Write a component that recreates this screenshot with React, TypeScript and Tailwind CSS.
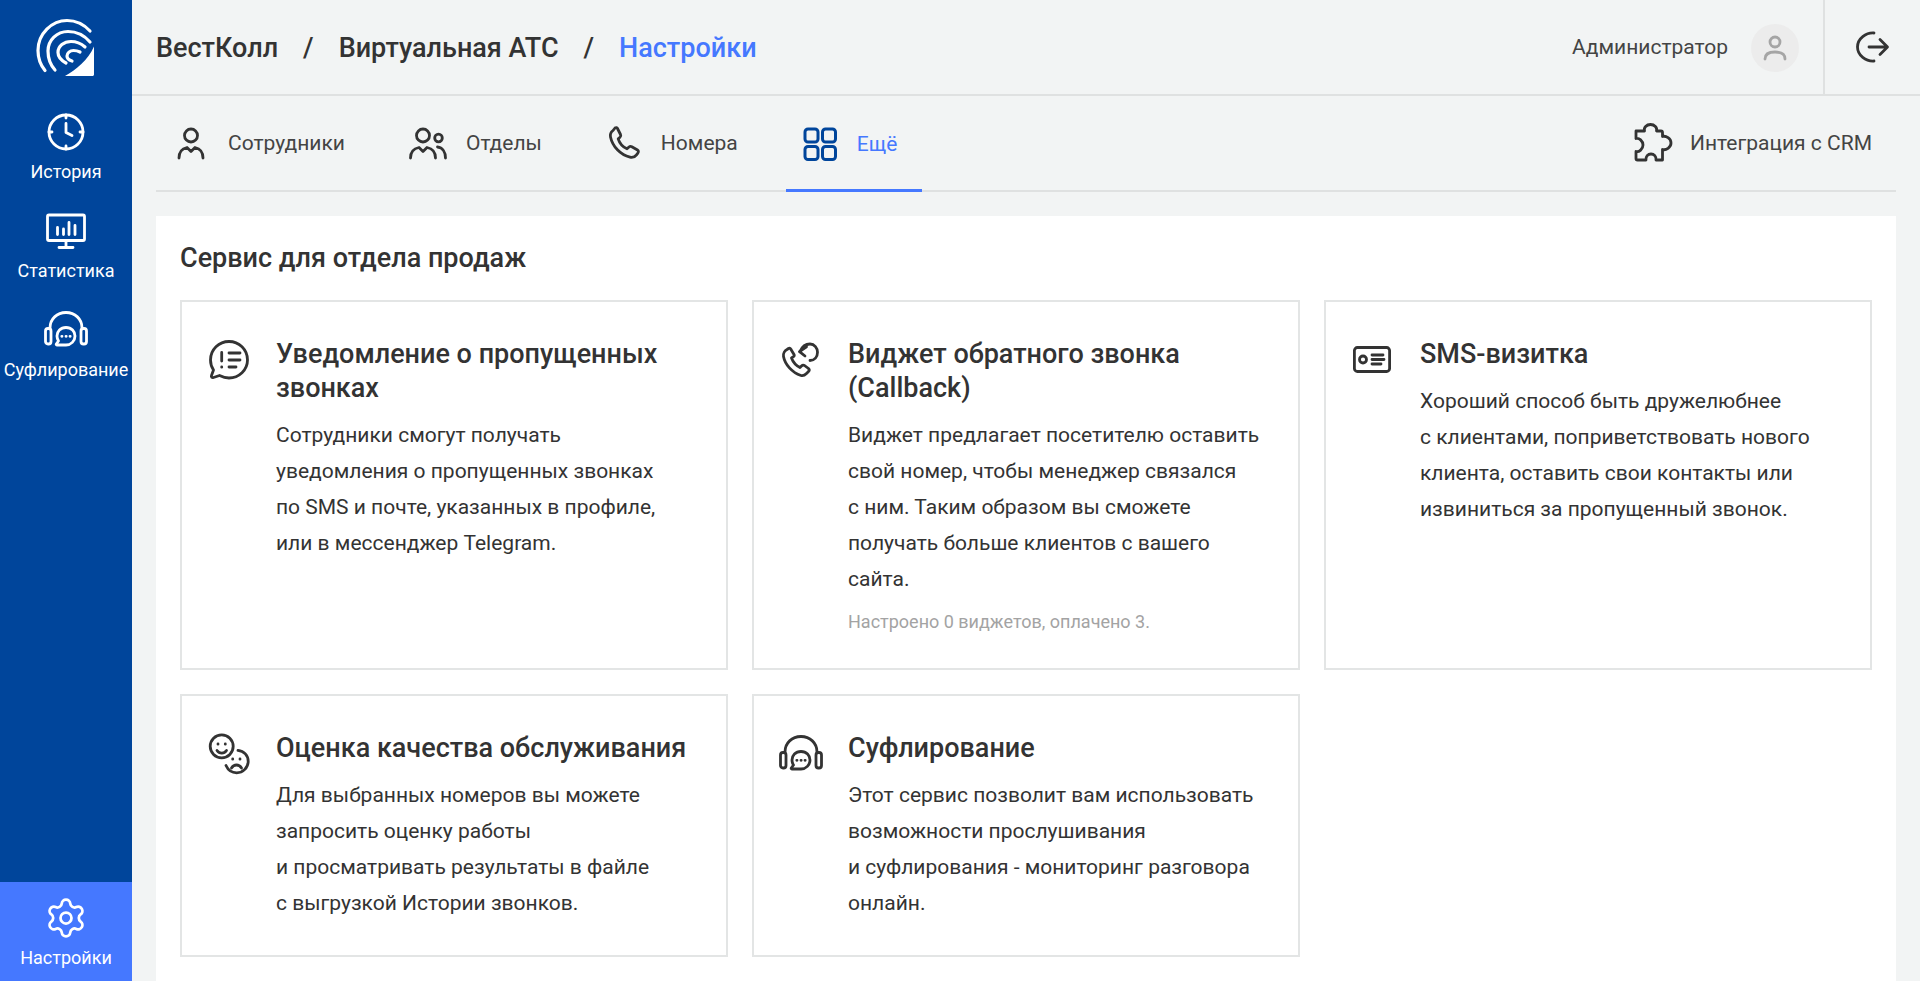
import React from "react";
import { Settings } from "lucide-react";

const S = ({ size = 44, w = 2.8, className, children }: { size?: number; w?: number; className?: string; children: React.ReactNode }) => (
  <svg width={size} height={size} viewBox={`0 0 ${size} ${size}`} fill="none" stroke="currentColor" strokeWidth={w} strokeLinecap="round" strokeLinejoin="round" className={className}>
    {children}
  </svg>
);

const Logo = () => (
  <svg width="132" height="96" viewBox="0 0 132 96" fill="none" stroke="#fff" strokeWidth="3.200" strokeLinecap="round">
    <path d="M45 70.500C40.500 65 38 58 38 50.500C38 33.500 52 20.500 67 20.500C75 20.500 84 24.500 90 31" />
    <path d="M55 70C50.500 65 48 58 48 51C48 40 57 31.500 68 31.500C76 31.500 84 35 90 42" />
    <path d="M66 63C60.500 60 58 56.500 58 52.500C58 46 64 41.500 71 41.500C76 41.500 81 43.500 85 47" />
    <path d="M72 61C68.500 60 67 58 67 56C67 53 70 50.500 73.500 50.500C76 50.500 78 51 80 52" />
    <path d="M94 46.500V74.500C94 75.300 93.300 76 92.500 76H65C76 70 88 60 94 46.500Z" fill="#fff" stroke="none" />
  </svg>
);

const History = () => (
  <S>
    <circle cx="22" cy="22" r="17" />
    <path d="M22 5V8M22 36V39M5 22H8M36 22H39" />
    <path d="M22 13.500V22.500L28 25.500" />
  </S>
);
const Stats = () => (
  <S>
    <rect x="3.500" y="6" width="37" height="25.500" rx="1.500" />
    <path d="M22 31.500V38.500M15 38.500H29" />
    <path d="M13.500 18.500V25.500M19.500 20V25.500M25 13.500V25.500M31 16.500V25.500" />
  </S>
);
const Headset = () => (
  <S>
    <path d="M6 20C6 11 13 4.500 22 4.500C31 4.500 38 11 38 20" />
    <rect x="1.500" y="20.500" width="5.500" height="15.500" rx="2.500" />
    <rect x="37" y="20.500" width="5.500" height="15.500" rx="2.500" />
    <path d="M22 19.500C27.500 19.500 31 23.500 31 28C31 33 27 37 22 37H12.800C12.300 37 12 36.500 12.300 36L14.500 33C13.500 31.500 13 30 13 28C13 23.500 16.500 19.500 22 19.500Z" />
    <path d="M17.800 28.300H18M22 28.300H22.200M26 28.300H26.200" />
  </S>
);

const Person = () => (
  <svg width="40" height="40" viewBox="0 0 40 40" fill="none" stroke="#333" strokeWidth="2.800" strokeLinecap="round" strokeLinejoin="round">
    <circle cx="20" cy="12.500" r="6.500" />
    <path d="M8 35C8 29 11.500 25.500 16 24.500L20 28.500L24 24.500C28.500 25.500 32 29 32 35" />
  </svg>
);
const People = () => (
  <svg width="40" height="40" viewBox="0 0 40 40" fill="none" stroke="#333" strokeWidth="2.800" strokeLinecap="round" strokeLinejoin="round">
    <circle cx="16" cy="12.500" r="6.500" />
    <circle cx="31.500" cy="15" r="3.800" />
    <path d="M3.500 35C3.500 29 7 25.500 12 24.500L16 28.500L20 24.500C25 25.500 28.500 29 28.500 35" />
    <path d="M30.500 24C35.500 24.500 38.500 29 38.500 35" />
  </svg>
);
const Phone = () => (
  <svg width="40" height="40" viewBox="0 0 40 40" fill="none" stroke="#333" strokeWidth="2.800" strokeLinecap="round" strokeLinejoin="round">
    <path d="M13.500 5.500L16.500 11.500C17 12.500 16.800 13.500 16 14.200L14.200 15.800C15.500 20 19 24 23 25.800L25 24C25.800 23.300 26.800 23.200 27.800 23.700L33.500 27C34.500 27.600 34.700 28.800 34 29.800L32.500 31.800C31 33.800 28.500 34.800 26 34.200C16.500 32 8.500 23.500 6.500 14C6 11.500 7 9 9 7.500L11 5C12 4.300 13 4.500 13.500 5.500Z" />
  </svg>
);
const Grid4 = () => (
  <svg width="40" height="40" viewBox="0 0 40 40" fill="none" stroke="#00459b" strokeWidth="3">
    <rect x="5" y="5" width="13" height="13" rx="3" />
    <rect x="22.500" y="5" width="13" height="13" rx="3" />
    <rect x="5" y="22.500" width="13" height="13" rx="3" />
    <rect x="22.500" y="22.500" width="13" height="13" rx="3" />
  </svg>
);
const Puzzle = () => (
  <svg width="40" height="40" viewBox="0 0 40 40" fill="none" stroke="#333" strokeWidth="2.800" strokeLinejoin="round" strokeLinecap="round">
    <path d="M2 8H10.500C9.500 4.500 12.500 1.500 16.500 1.500C20.500 1.500 23.500 4.500 22.500 8H27C28 8 28.500 8.500 28.500 9.500V13.500C32 12.500 37 15.500 37 20C37 24.500 32 27.500 28.500 26.500V37H22C22.500 33.500 20 31 17 31C14 31 11.500 33.500 12 37H3.500C2.500 37 2 36.500 2 35.500V28.500C5 29.500 9 26 9 22C9 18 5 14.500 2 15.500V8Z" />
  </svg>
);
const Logout = () => (
  <svg width="36" height="36" viewBox="0 0 36 36" fill="none" stroke="#333" strokeWidth="2.800" strokeLinecap="round" strokeLinejoin="round">
    <path d="M20 4C12 3.500 3.500 9.500 3.500 18C3.500 26.500 12 32.500 20 32" />
    <path d="M15 18H33M26 10.500L33.500 18L26 25.500" />
  </svg>
);
const Chat = () => (
  <S>
    <path d="M22 3.500C32 3.500 40.500 11.500 40.500 22C40.500 32 32 40 22 40C18 40 15.500 39 12.500 37.500L6.500 39.500C5 40 4 39 4.500 37.500L6.500 32C4.500 29 3.500 25.500 3.500 22C3.500 11.500 12 3.500 22 3.500Z" />
    <path d="M14.700 14.500V23M14.700 29V29.200M22 15H33M22 22H33M22 29H29" />
  </S>
);
const Callback = () => (
  <svg width="40" height="40" viewBox="0 0 40 40" fill="none" stroke="#333" strokeWidth="2.800" strokeLinecap="round" strokeLinejoin="round">
    <path transform="translate(-2 1)" d="M12 8.500L15 13.500C15.500 14.500 15 15.500 14 16L12.500 17C14 21 17 24.500 21 26.500L22.500 25C23.500 24 24.500 24 25.500 24.500L29.500 27.500C30.500 28.500 30.500 29.500 29.500 30.500L27.500 32.500C26 34 24 35 22 34.500C13 31.500 6 23.500 4.500 15.500C4 12.500 6 9.500 8 8.500L9.500 7.500C10.500 7 11.500 7.300 12 8.500Z" />
    <path d="M19 11.500C21 7 25 4 29 4C33.500 4 36.500 8 36.500 12.300C36.500 17 33.500 20.500 29 20.500" />
    <path d="M25.500 6.800L18.500 11.700L24 16" />
  </svg>
);
const Card2 = () => (
  <S>
    <rect x="3.400" y="9.500" width="35.200" height="24" rx="3" />
    <circle cx="12" cy="21.500" r="3.500" />
    <path d="M21 17H32M21 21.500H33M21 26H30" />
  </S>
);
const Faces = () => (
  <S>
    <circle cx="14.700" cy="14.300" r="11.500" />
    <path d="M11 12V12.200M18.300 12V12.200M10 18.500C12.500 22 17 22 19.500 18.500" />
    <path d="M31 18.300C37 19 41.200 23.500 41.200 29.300C41.200 35.500 36 40.800 29.700 40.800C25 40.800 21 38 19 33.500" />
    <path d="M25.700 27V27.200M33 27V27.200M24.500 36C27 32 32 32 34.500 36" />
  </S>
);

const SideItem = ({ icon, label }: { icon: React.ReactNode; label: string }) => (
  <a className="flex h-[99px] flex-col items-center justify-start pt-[14px] text-white">
    <span className="flex h-[44px] w-[44px] items-center justify-center">{icon}</span>
    <span className="mt-[6px] text-[18px] leading-[24px]">{label}</span>
  </a>
);

const Tab = ({ icon, label, active, className }: { icon: React.ReactNode; label: string; active?: boolean; className?: string }) => (
  <a className={`flex h-[96px] items-center gap-[17px] text-[21px] ${active ? "border-b-[3px] border-[#4578ff] pt-[3px] text-[#4578ff]" : "text-[#444]"} ${className ?? ""}`}>
    {icon}
    <span className="mt-[2px]">{label}</span>
  </a>
);

const Card = ({ icon, title, lines, note }: { icon: React.ReactNode; title: React.ReactNode; lines: string[]; note?: string }) => (
  <div className="flex border-2 border-[#e3e5e5] pt-[35px] pb-[34px] pl-[25px] pr-[16px]">
    <div className="mt-[1px] flex h-[44px] w-[44px] shrink-0 items-center justify-center text-[#333]">{icon}</div>
    <div className="ml-[25px] min-w-0">
      <h3 className="text-[27px] font-medium leading-[34px] text-[#333]">{title}</h3>
      <p className="mt-[12px] text-[21px] leading-[36px] text-[#333]">
        {lines.map((l, i) => (
          <React.Fragment key={i}>
            {l}
            {i < lines.length - 1 && <br />}
          </React.Fragment>
        ))}
      </p>
      {note && <p className="mt-[13px] text-[18px] leading-[24px] text-[#a3a3a3]">{note}</p>}
    </div>
  </div>
);

export default function App() {
  return (
    <div className="flex h-screen overflow-hidden bg-[#f2f4f4] font-['Roboto',sans-serif]">
      <aside className="flex w-[132px] shrink-0 flex-col bg-[#00459b]">
        <div className="h-[96px]">
          <Logo />
        </div>
        <SideItem icon={<History />} label="История" />
        <SideItem icon={<Stats />} label="Статистика" />
        <SideItem icon={<Headset />} label="Суфлирование" />
        <a className="mt-auto flex h-[99px] flex-col items-center bg-[#4578ff] pt-[14px] text-white">
          <Settings size={44} strokeWidth={1.5} />
          <span className="mt-[6px] text-[18px] leading-[24px]">Настройки</span>
        </a>
      </aside>
      <div className="flex min-w-0 flex-1 flex-col">
        <header className="flex h-[96px] shrink-0 items-center border-b-2 border-[#dfe1e1] pl-[24px] pt-[2px]">
          <div className="flex flex-1 items-center text-[27px] font-medium text-[#333]">
            <span>ВестКолл</span>
            <span className="mx-[25px]">/</span>
            <span>Виртуальная АТС</span>
            <span className="mx-[25px]">/</span>
            <span className="text-[#4578ff]">Настройки</span>
          </div>
          <span className="text-[21px] text-[#444]">Администратор</span>
          <div className="ml-[23px] flex h-[48px] w-[48px] items-center justify-center rounded-full bg-[#ececec]">
            <svg width="28" height="28" viewBox="0 0 28 28" fill="none" stroke="#a5a5a5" strokeWidth="2.800" strokeLinecap="round">
              <circle cx="14" cy="8" r="5" />
              <path d="M4 25C4 20 8 18 14 18C20 18 24 20 24 25" />
            </svg>
          </div>
          <div className="-mt-[2px] ml-[24px] flex h-[94px] w-[97px] items-center justify-center border-l-2 border-[#dfe1e1] pr-[2px]">
            <Logout />
          </div>
        </header>
        <div className="mx-[24px] flex h-[96px] shrink-0 items-center gap-[24px] border-b-2 border-[#dfe1e1] pl-[15px]">
          <Tab icon={<Person />} label="Сотрудники" className="pr-[24px]" />
          <Tab icon={<People />} label="Отделы" className="ml-[14px] gap-[19px] pr-[24px]" />
          <Tab icon={<Phone />} label="Номера" className="ml-[14px] pr-[24px]" />
          <Tab icon={<Grid4 />} label="Ещё" active className="-mb-[2px] pl-[14px] pr-[25px]" />
          <div className="ml-auto flex items-center gap-[16px] pr-[24px] text-[21px] text-[#444]">
            <Puzzle />
            <span className="mt-[2px]">Интеграция с CRM</span>
          </div>
        </div>
        <main className="mx-[24px] mt-[24px] flex-1 bg-white p-[24px]">
          <h2 className="mb-[24px] text-[27px] font-medium leading-[36px] text-[#333]">Сервис для отдела продаж</h2>
          <div className="grid grid-cols-3 gap-[24px]">
            <Card
              icon={<Chat />}
              title={<>Уведомление о пропущенных<br />звонках</>}
              lines={["Сотрудники смогут получать", "уведомления о пропущенных звонках", "по SMS и почте, указанных в профиле,", "или в мессенджер Telegram."]}
            />
            <Card
              icon={<Callback />}
              title={<>Виджет обратного звонка<br />(Callback)</>}
              lines={["Виджет предлагает посетителю оставить", "свой номер, чтобы менеджер связался", "с ним. Таким образом вы сможете", "получать больше клиентов с вашего", "сайта."]}
              note="Настроено 0 виджетов, оплачено 3."
            />
            <Card
              icon={<Card2 />}
              title="SMS-визитка"
              lines={["Хороший способ быть дружелюбнее", "с клиентами, поприветствовать нового", "клиента, оставить свои контакты или", "извиниться за пропущенный звонок."]}
            />
            <Card
              icon={<Faces />}
              title="Оценка качества обслуживания"
              lines={["Для выбранных номеров вы можете", "запросить оценку работы", "и просматривать результаты в файле", "с выгрузкой Истории звонков."]}
            />
            <Card
              icon={<Headset />}
              title="Суфлирование"
              lines={["Этот сервис позволит вам использовать", "возможности прослушивания", "и суфлирования - мониторинг разговора", "онлайн."]}
            />
          </div>
        </main>
      </div>
    </div>
  );
}
